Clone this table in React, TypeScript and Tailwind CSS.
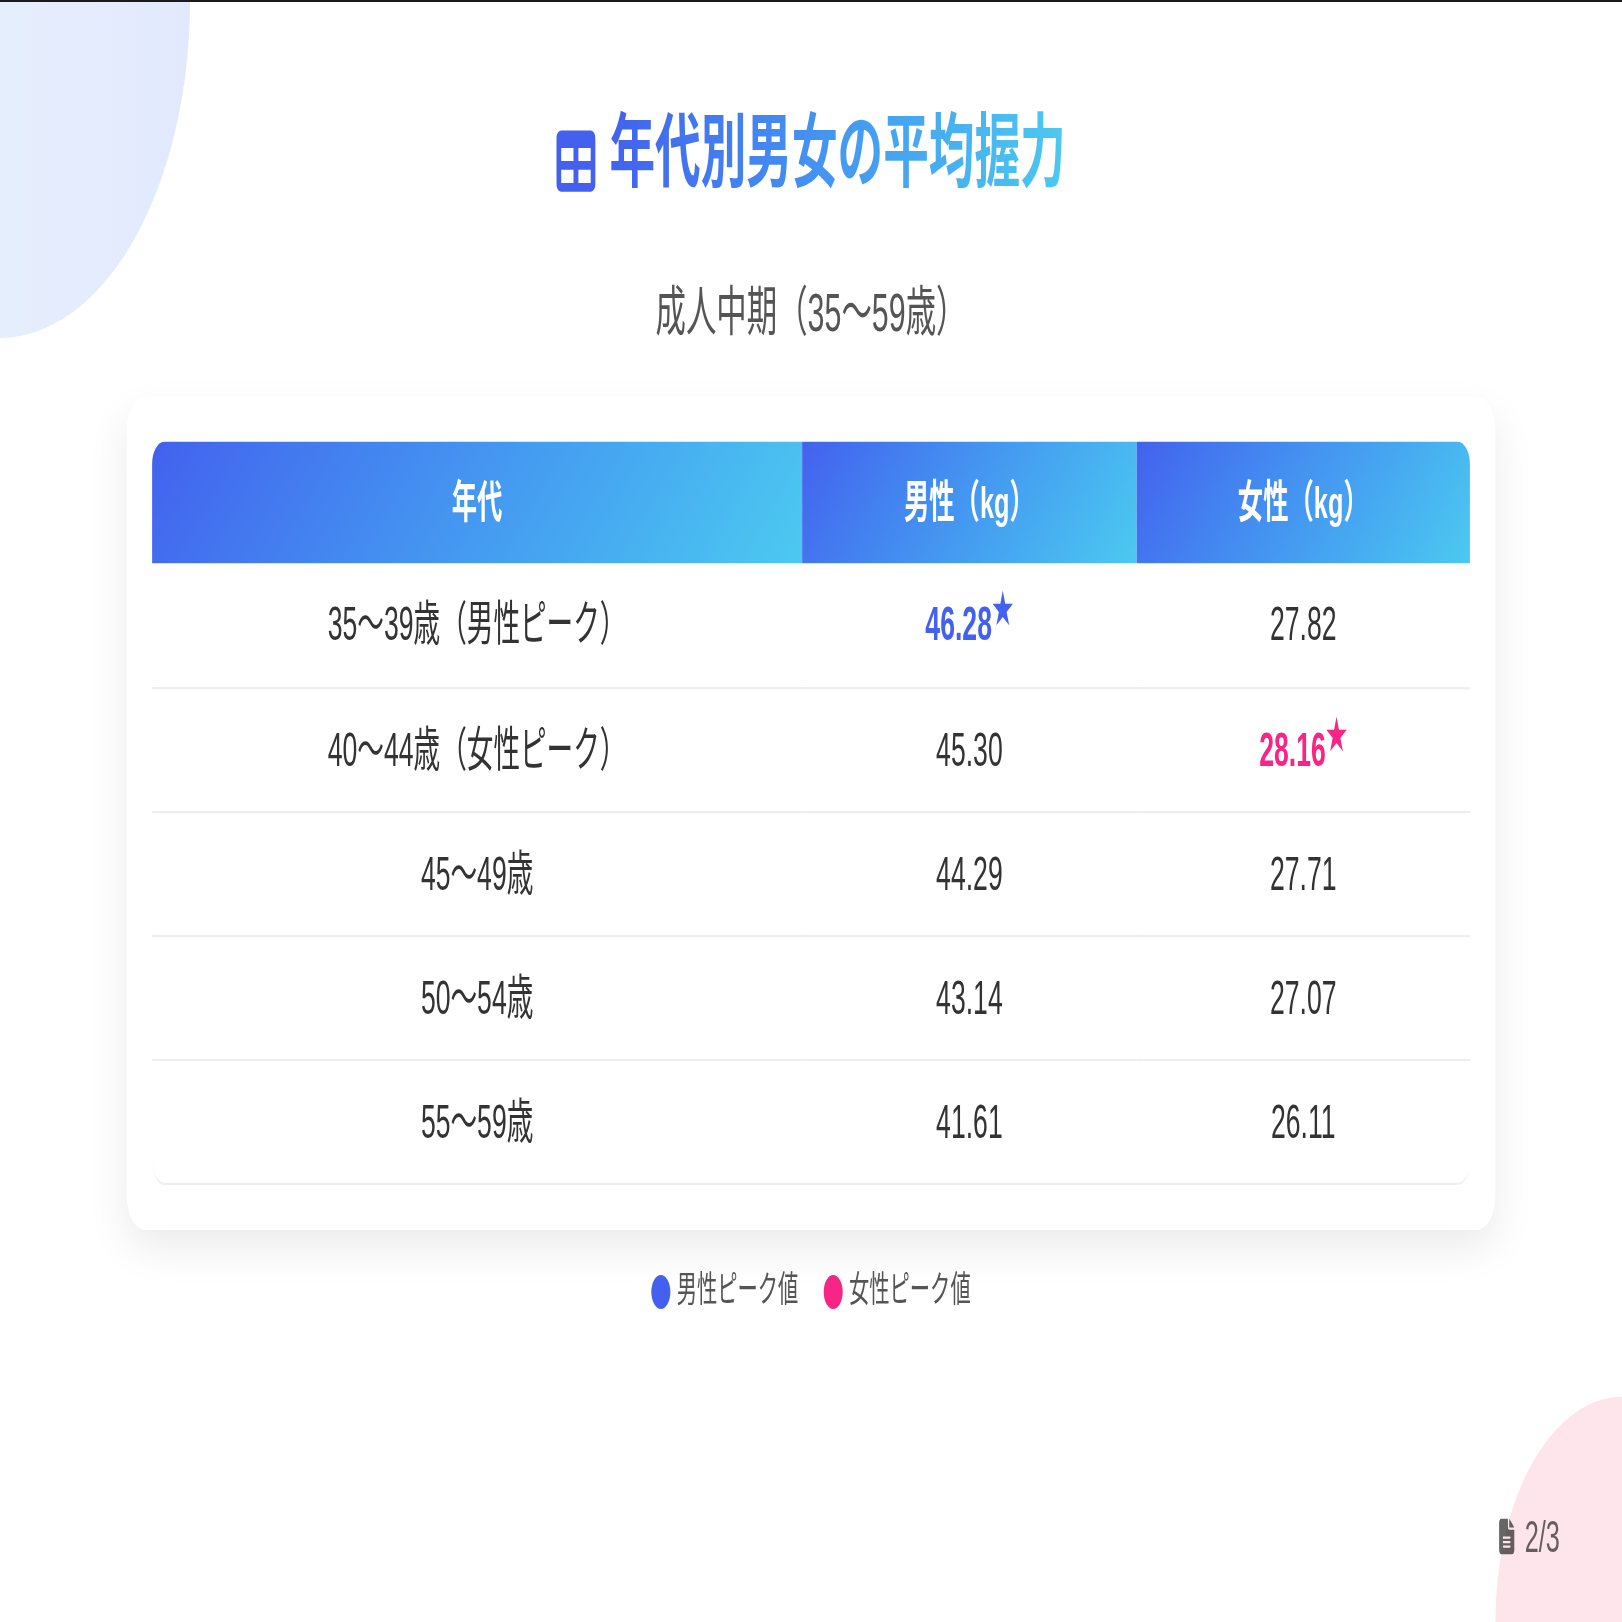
import { FaFileLines, FaTable } from "react-icons/fa6";

type Row = {
  age: string;
  male: string;
  female: string;
  peak?: "male" | "female";
};

const rows: Row[] = [
  { age: "35〜39歳（男性ピーク）", male: "46.28", female: "27.82", peak: "male" },
  { age: "40〜44歳（女性ピーク）", male: "45.30", female: "28.16", peak: "female" },
  { age: "45〜49歳", male: "44.29", female: "27.71" },
  { age: "50〜54歳", male: "43.14", female: "27.07" },
  { age: "55〜59歳", male: "41.61", female: "26.11" },
];

function Peak({ value, color }: { value: string; color: string }) {
  return (
    <span className={"font-bold " + color}>
      {value}
      <span className="relative -top-[8px] text-[17px] leading-[0]">★</span>
    </span>
  );
}

export default function App() {
  return (
    <div className="relative h-[1622px] w-[1622px] overflow-hidden bg-white">
      {/* slide is 1280x720, stretched to fill the square shot */}
      <div className="relative h-[720px] w-[1280px] origin-top-left scale-x-[1.2672] scale-y-[2.2528] overflow-hidden bg-white font-['Liberation_Sans','Noto_Sans_CJK_JP',sans-serif]">
        <div className="absolute -left-[150px] -top-[150px] h-[300px] w-[300px] rounded-full bg-linear-to-r from-[#eaf4fd] to-[#e2e9fd]" />
        <div className="absolute -bottom-[100px] -right-[100px] h-[200px] w-[200px] rounded-full bg-[#fde5eb]" />

        <div className="relative flex flex-col items-center pt-[40px]">
          <h1 className="flex items-center gap-[11px] font-['Noto_Sans_CJK_JP',sans-serif] text-[36px] font-bold leading-[49px]">
            <FaTable size={31} className="translate-y-[7px] text-[#4361ee]" />
            <span className="bg-linear-to-r from-[#4361ee] to-[#4cc9f0] bg-clip-text text-transparent">
              年代別男女の平均握力
            </span>
          </h1>

          <p className="mt-[32px] text-[24px] leading-[35px] text-[#555]">
            成人中期（35〜59歳）
          </p>

          <div className="mt-[20px] w-[1080px] rounded-[15px] bg-white p-5 shadow-[0_8px_24px_rgba(0,0,0,0.08)]">
            <div className="overflow-hidden rounded-[10px] border-b border-[#eee]">
              <table className="w-full table-fixed border-collapse text-[20px] leading-[24px]">
                <colgroup>
                  <col className="w-[513px]" />
                  <col className="w-[264px]" />
                  <col className="w-[263px]" />
                </colgroup>
                <thead>
                  <tr>
                    <th className="bg-linear-135 from-[#4361ee] to-[#4cc9f0] py-[15px] font-bold text-white">
                      年代
                    </th>
                    <th className="bg-linear-135 from-[#4361ee] to-[#4cc9f0] py-[15px] font-bold text-white">
                      男性（kg）
                    </th>
                    <th className="bg-linear-135 from-[#4361ee] to-[#4cc9f0] py-[15px] font-bold text-white">
                      女性（kg）
                    </th>
                  </tr>
                </thead>
                <tbody className="text-[21px] text-[#333]">
                  {rows.map((r, i) => (
                    <tr
                      key={r.age}
                      className={i < rows.length - 1 ? "border-b border-[#eee]" : ""}
                    >
                      <td className="h-[55px] p-0 text-center">{r.age}</td>
                      <td className="h-[55px] p-0 text-center">
                        {r.peak === "male" ? (
                          <Peak value={r.male} color="text-[#4361ee]" />
                        ) : (
                          r.male
                        )}
                      </td>
                      <td className="h-[55px] p-0 text-center">
                        {r.peak === "female" ? (
                          <Peak value={r.female} color="text-[#f72585]" />
                        ) : (
                          r.female
                        )}
                      </td>
                    </tr>
                  ))}
                </tbody>
              </table>
            </div>
          </div>

          <div className="mt-[15px] flex items-center gap-5 text-[16px] leading-[24px] text-[#555]">
            <div className="flex items-center gap-[5px]">
              <span className="h-[15px] w-[15px] rounded-full bg-[#4361ee]" />
              男性ピーク値
            </div>
            <div className="flex items-center gap-[5px]">
              <span className="h-[15px] w-[15px] rounded-full bg-[#f72585]" />
              女性ピーク値
            </div>
          </div>
        </div>

        <div className="absolute bottom-[28px] right-[49px] flex items-center gap-[6px] text-[20px] leading-none text-black/60">
          <FaFileLines size={16} />
          2/3
        </div>
      </div>

      <div className="absolute left-0 right-0 top-0 h-[2px] bg-[#1a1a1a]" />
    </div>
  );
}
